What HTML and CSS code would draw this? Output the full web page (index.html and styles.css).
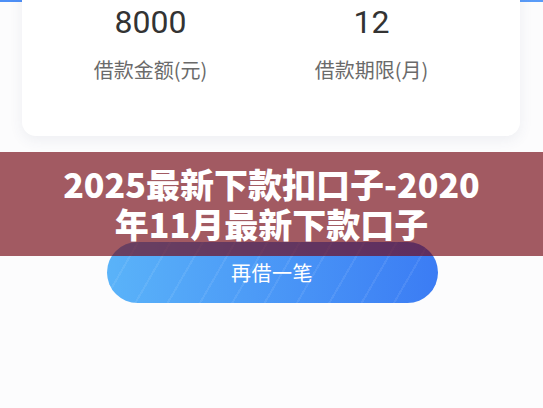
FILE: index.html
```html
<!doctype html>
<html lang="zh-CN">
  <head>
    <meta charset="UTF-8" />
    <meta name="viewport" content="width=device-width, initial-scale=1.0" />
    <title>2025最新下款扣口子</title>
    <link rel="stylesheet" href="styles.css">
  </head>
  <body>
    <div class="header-band"></div>

    <div class="loan-card">
      <div class="loan-item">
        <div class="loan-value">8000</div>
        <div class="loan-label">借款金额(元)</div>
      </div>
      <div class="loan-item">
        <div class="loan-value">12</div>
        <div class="loan-label">借款期限(月)</div>
      </div>
    </div>

    <div class="actions">
      <button class="again-btn">再借一笔</button>
    </div>

    <div class="title-banner">
      <h1>2025最新下款扣口子-2020<br />年11月最新下款口子</h1>
    </div>
  </body>
</html>
```

FILE: styles.css
```css
html,
body {
  margin: 0;
  padding: 0;
}
body {
  position: relative;
  height: 408px;
  overflow: hidden;
  background: #fcfcfd;
  font-family: "Noto Sans", "Noto Sans CJK SC", sans-serif;
}
.header-band {
  height: 2px;
  background: linear-gradient(90deg, #4d8ff6, #5a9cf8);
}
.loan-card {
  display: grid;
  grid-template-columns: 221px 221px;
  margin: -24px 23px 0 22px;
  padding: 22px 38px 0 18px;
  height: 136px;
  background: #fff;
  border-radius: 14px;
  box-shadow: 0 4px 14px rgba(60, 80, 120, 0.08);
}
.loan-item {
  text-align: center;
}
.loan-value {
  font-family: Roboto, "Noto Sans", sans-serif;
  font-size: 32px;
  line-height: 44px;
  color: #333;
}
.loan-label {
  margin-top: 12px;
  font-family: "Noto Sans CJK SC", sans-serif;
  font-size: 20px;
  line-height: 28px;
  color: #6a6a6a;
}
.actions {
  display: flex;
  justify-content: center;
  padding-top: 106px;
}
.again-btn {
  width: 331px;
  height: 61px;
  border: none;
  border-radius: 31px;
  margin-left: 1px;
  padding-bottom: 2px;
  background:
    repeating-linear-gradient(120deg, transparent 0 26px, rgba(255, 255, 255, 0.08) 26px 28px),
    linear-gradient(90deg, #5ab3f9, #3b7cf4);
  color: #fff;
  font-family: "Noto Sans CJK SC", sans-serif;
  font-size: 20px;
  letter-spacing: 0.5px;
}
.title-banner {
  position: absolute;
  left: 0;
  right: 0;
  top: 152px;
  height: 104px;
  display: flex;
  align-items: center;
  justify-content: center;
  background: rgba(113, 3, 15, 0.65);
}
.title-banner h1 {
  margin: 0;
  color: #fff;
  font-family: "Noto Sans CJK SC", sans-serif;
  font-weight: 900;
  font-size: 34px;
  line-height: 40px;
  text-align: center;
}
```
